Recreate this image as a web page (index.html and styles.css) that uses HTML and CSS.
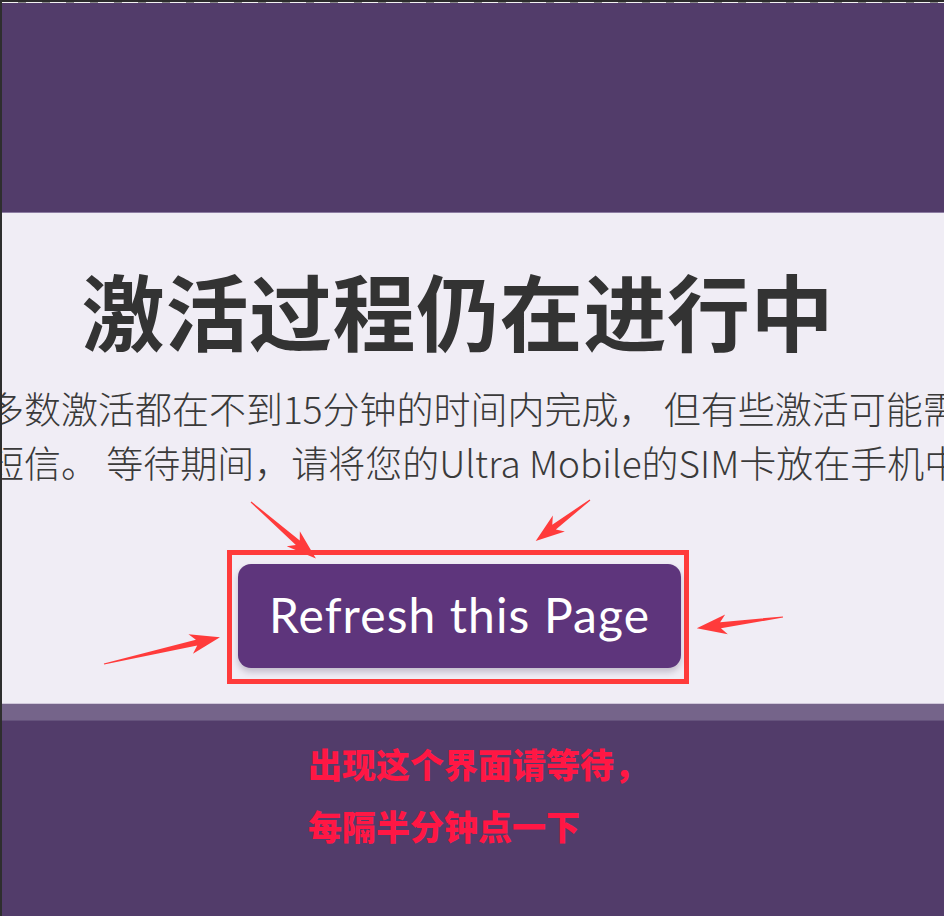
FILE: index.html
```html
<!DOCTYPE html>
<html lang="zh-CN">
<head>
<meta charset="utf-8">
<title>激活过程仍在进行中</title>
<link rel="stylesheet" href="styles.css">
</head>
<body>
<div class="page">
  <div class="topbar"><div class="dashes"></div></div>
  <header class="header"></header>
  <main class="content">
    <h1 class="title">激活过程仍在进行中</h1>
    <div class="para">
      <p class="line">多数激活都在不到15分钟的时间内完成， 但有些激活可能需要长达一个小时才能完成。</p>
      <p class="line">短信。 等待期间，请将您的Ultra Mobile的SIM卡放在手机中。</p>
    </div>
    <div class="mark-box">
      <button class="refresh" type="button">Refresh this Page</button>
    </div>
  </main>
  <div class="band"></div>
  <footer class="footer">
    <p class="note">出现这个界面请等待，</p>
    <p class="note">每隔半分钟点一下</p>
  </footer>
  <svg class="arrows" width="944" height="916" viewBox="0 0 944 916" aria-hidden="true">
    <g fill="#ff3b3b">
      <polygon points="0,-0.6 62,-3 56,-10 86,0 56,10 62,3 0,0.6" transform="translate(251,502) rotate(41)"/>
      <polygon points="0,-0.6 45,-3 39,-10 68,0 39,10 45,3 0,0.6" transform="translate(590,500) rotate(143)"/>
      <polygon points="0,-0.6 95,-3 89,-10 119,0 89,10 95,3 0,0.6" transform="translate(104,664) rotate(-13)"/>
      <polygon points="0,-0.6 63,-3 57,-10 87,0 57,10 63,3 0,0.6" transform="translate(783,617) rotate(172.5)"/>
    </g>
  </svg>
</div>
</body>
</html>
```

FILE: styles.css
```css
* { box-sizing: border-box; }
html, body {
  margin: 0;
  padding: 0;
  background: #523c6a;
}
.page {
  position: relative;
  width: 944px;
  height: 916px;
  overflow: hidden;
  display: flex;
  flex-direction: column;
  border-left: 2px solid #2e2e2e;
  background: #523c6a;
  font-family: "Noto Sans CJK SC", "Noto Sans", sans-serif;
}
.topbar {
  height: 3px;
  background: #2b2b2b;
  display: flex;
  flex-direction: column;
  justify-content: flex-end;
}
.dashes {
  height: 1px;
  background: repeating-linear-gradient(90deg, #f2f2f2 0 16px, #8a8a8a 16px 24px);
}
.header {
  height: 210px;
  background: #523c6a;
  border-bottom: 1px solid #8c7ca2;
}
.content {
  height: 491px;
  background: #f0edf5;
  border-bottom: 1px solid #d0c8da;
  display: flex;
  flex-direction: column;
  align-items: center;
  padding: 55px 30px 0 0;
}
.title {
  margin: 0;
  font-size: 83px;
  line-height: 83px;
  font-weight: 700;
  color: #333333;
  white-space: nowrap;
  letter-spacing: 0.6px;
}
.para {
  align-self: stretch;
  margin: 30px 0 0 -15px;
  color: #3a3a3a;
  font-size: 37px;
  font-weight: 300;
  line-height: 54px;
}
.line {
  margin: 0;
  white-space: nowrap;
}
.mark-box {
  margin-top: 61px;
  width: 462px;
  height: 134px;
  border: 5px solid #ff3b3b;
  padding: 9px 3px 0 6px;
  display: flex;
}
.refresh {
  width: 443px;
  height: 104px;
  border: none;
  border-radius: 13px;
  background: #5e357c;
  box-shadow: 0 4px 6px rgba(40, 20, 60, 0.22);
  color: #ffffff;
  font-family: "Lato", "Open Sans", sans-serif;
  font-weight: 400;
  font-size: 48px;
  letter-spacing: 1.1px;
  padding: 0 0 4px 0;
}
.band {
  height: 17px;
  background: #75648a;
  border-bottom: 1px solid #65537c;
}
.footer {
  flex: 1;
  background: #523c6a;
  padding: 12px 0 0 306px;
}
.note {
  margin: 0;
  color: #ff1744;
  font-size: 34px;
  line-height: 62px;
  font-weight: 900;
  white-space: nowrap;
}
.arrows {
  position: absolute;
  left: -2px;
  top: 0;
  pointer-events: none;
}
```
